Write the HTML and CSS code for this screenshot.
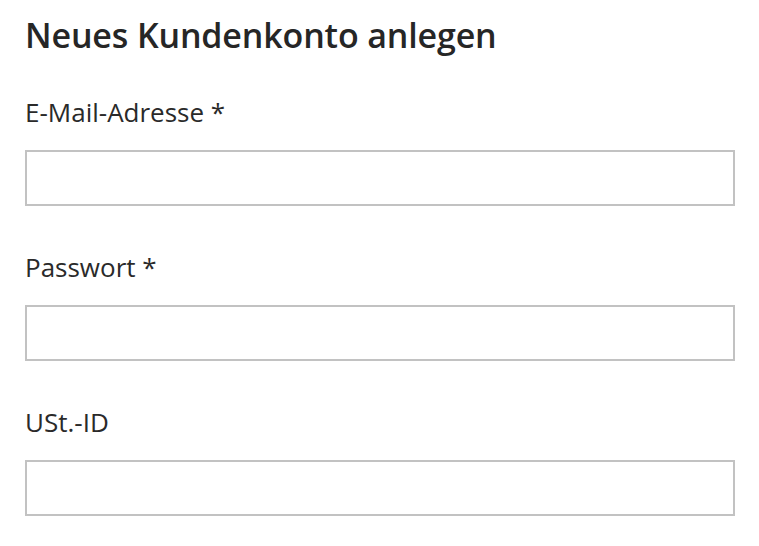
FILE: index.html
```html
<!DOCTYPE html>
<html lang="de">
<head>
<meta charset="utf-8">
<title>Neues Kundenkonto anlegen</title>
<link rel="stylesheet" href="styles.css">
</head>
<body>
<main class="page">
  <h1 class="title">Neues Kundenkonto anlegen</h1>
  <form class="form">
    <div class="field">
      <label class="label" for="email">E-Mail-Adresse *</label>
      <input class="input" id="email" type="email">
    </div>
    <div class="field">
      <label class="label" for="pw">Passwort *</label>
      <input class="input" id="pw" type="password">
    </div>
    <div class="field">
      <label class="label" for="vat">USt.-ID</label>
      <input class="input" id="vat" type="text">
    </div>
  </form>
</main>
</body>
</html>
```
FILE: styles.css
```css
html, body {
  margin: 0;
  padding: 0;
  background: #fff;
}
.page {
  padding: 14px 24px 0 25px;
  font-family: "Open Sans", "Liberation Sans", sans-serif;
  color: #333;
}
.title {
  margin: 0 0 40px;
  font-size: 34px;
  line-height: 42px;
  font-weight: 600;
  letter-spacing: -0.15px;
  color: #262626;
}
.form {
  display: flex;
  flex-direction: column;
  gap: 45px;
}
.field {
  display: flex;
  flex-direction: column;
}
.label {
  display: block;
  font-size: 26px;
  line-height: 32px;
  margin-bottom: 22px;
  color: #2a2a2a;
}
.input {
  box-sizing: border-box;
  width: 100%;
  height: 56px;
  margin: 0;
  border: 2px solid #c2c2c2;
  border-radius: 0;
  background: #fff;
  font: inherit;
  outline: none;
}
```
